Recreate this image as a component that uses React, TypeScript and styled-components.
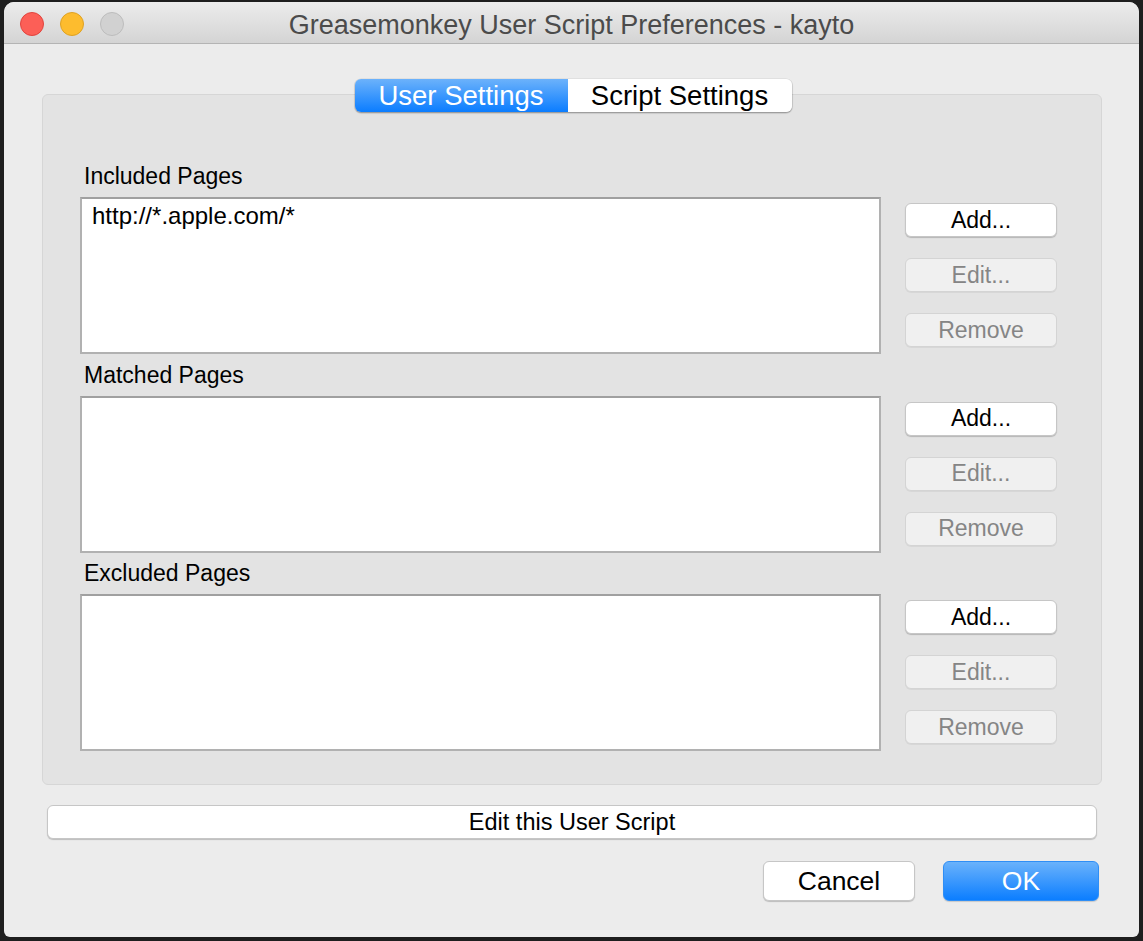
import React from "react";
import styled, { createGlobalStyle, css } from "styled-components";

const Global = createGlobalStyle`
  html, body { margin: 0; padding: 0; background: #1e1e1e; }
  body { font-family: "Liberation Sans", Arial, sans-serif; }
  * { box-sizing: border-box; }
`;

const Stage = styled.div`
  width: 1143px;
  height: 941px;
  padding: 2px 4px 4px 4px;
  background: #1e1e1e;
`;

const Window = styled.div`
  width: 1135px;
  height: 935px;
  background: #ececec;
  border-radius: 10px 10px 6px 6px;
  overflow: hidden;
  display: flex;
  flex-direction: column;
`;

const TitleBar = styled.div`
  height: 41px;
  flex: none;
  display: flex;
  align-items: center;
  position: relative;
  background: linear-gradient(#ececec, #d4d4d4);
  border-bottom: 1px solid #b4b4b4;
  box-sizing: content-box;
`;

const Lights = styled.div`
  display: flex;
  gap: 16px;
  padding-left: 16px;
  position: absolute;
  left: 0;
  top: 10px;
`;

const Light = styled.span<{ $c: string; $b: string }>`
  width: 24px;
  height: 24px;
  border-radius: 50%;
  background: ${(p) => p.$c};
  border: 1px solid ${(p) => p.$b};
`;

const Title = styled.div`
  flex: 1;
  text-align: center;
  font-size: 27px;
  color: #4b4b4b;
  padding-top: 5px;
`;

const Body = styled.div`
  flex: 1;
  display: flex;
  flex-direction: column;
  padding: 35px 37px 0 38px;
`;

const TabRow = styled.div`
  display: flex;
  justify-content: center;
  margin-bottom: -18px;
  position: relative;
  z-index: 1;
  padding-left: 2px;
`;

const Segmented = styled.div`
  display: flex;
  height: 33px;
  border-radius: 6px;
  box-shadow: 0 0.5px 0 1px rgba(0, 0, 0, 0.08), 0 1px 1.5px rgba(0, 0, 0, 0.3);
  overflow: hidden;
`;

const Tab = styled.div<{ $active?: boolean }>`
  display: flex;
  align-items: center;
  justify-content: center;
  font-size: 27.5px;
  line-height: 1;
  ${(p) =>
    p.$active
      ? css`
          width: 213px;
          color: #fff;
          background: linear-gradient(#6cb2fb, #0b7dff);
        `
      : css`
          width: 224px;
          color: #000;
          background: #fff;
        `}
`;

const GroupBox = styled.div`
  height: 691px;
  background: #e3e3e3;
  border: 1px solid #d6d6d6;
  border-radius: 6px;
  padding: 69px 44px 0 37px;
  display: flex;
  flex-direction: column;
  gap: 8.5px;
`;

const Section = styled.div`
  display: flex;
  flex-direction: column;
  gap: 9px;
`;

const Label = styled.div`
  height: 24px;
  line-height: 24px;
  font-size: 23px;
  color: #000;
  padding-left: 4px;
`;

const Row = styled.div`
  display: flex;
  gap: 24px;
`;

const ListBox = styled.div`
  width: 801px;
  height: 157px;
  background: #fff;
  border: 2px solid #b1b1b1;
  border-top-color: #a0a0a0;
  padding: 4px 10px;
  font-size: 24px;
  line-height: 26px;
  color: #000;
`;

const Buttons = styled.div`
  display: flex;
  flex-direction: column;
  gap: 21px;
  padding-top: 6px;
`;

const PushButton = styled.div<{ $disabled?: boolean }>`
  width: 152px;
  height: 34px;
  border-radius: 6px;
  display: flex;
  align-items: center;
  justify-content: center;
  font-size: 23px;
  ${(p) =>
    p.$disabled
      ? css`
          background: #f0f0f0;
          color: #858585;
          border: 1px solid #d4d4d4;
          box-shadow: 0 1px 0 rgba(0, 0, 0, 0.05);
        `
      : css`
          background: #fff;
          color: #000;
          border: 1px solid #c6c6c6;
          box-shadow: 0 1px 1px rgba(0, 0, 0, 0.2);
        `}
`;

const WideButton = styled.div`
  margin: 20px 5px 0 5px;
  height: 34px;
  border-radius: 6px;
  background: #fff;
  border: 1px solid #c6c6c6;
  box-shadow: 0 1px 1px rgba(0, 0, 0, 0.2);
  display: flex;
  align-items: center;
  justify-content: center;
  font-size: 23.5px;
  color: #000;
`;

const Footer = styled.div`
  display: flex;
  justify-content: flex-end;
  gap: 28px;
  margin-top: 22px;
  padding-right: 3px;
`;

const DialogButton = styled.div<{ $primary?: boolean }>`
  height: 40px;
  border-radius: 6px;
  display: flex;
  align-items: center;
  justify-content: center;
  font-size: 26.5px;
  ${(p) =>
    p.$primary
      ? css`
          width: 156px;
          color: #fff;
          background: linear-gradient(#6ab2fb, #0c7eff);
          border: 1px solid #2f8ef5;
          box-shadow: 0 1px 1px rgba(0, 0, 0, 0.15);
        `
      : css`
          width: 152px;
          color: #000;
          background: #fff;
          border: 1px solid #c6c6c6;
          box-shadow: 0 1px 1px rgba(0, 0, 0, 0.2);
        `}
`;

const sections = [
  { label: "Included Pages", items: ["http://*.apple.com/*"] },
  { label: "Matched Pages", items: [] as string[] },
  { label: "Excluded Pages", items: [] as string[] },
];

export default function App() {
  return (
    <Stage>
      <Global />
      <Window>
        <TitleBar>
          <Lights>
            <Light $c="#fc5f57" $b="#e0443e" />
            <Light $c="#fdbc2e" $b="#dea123" />
            <Light $c="#d1d1d1" $b="#bcbcbc" />
          </Lights>
          <Title>Greasemonkey User Script Preferences - kayto</Title>
        </TitleBar>
        <Body>
          <TabRow>
            <Segmented>
              <Tab $active>User Settings</Tab>
              <Tab>Script Settings</Tab>
            </Segmented>
          </TabRow>
          <GroupBox>
            {sections.map((s) => (
              <Section key={s.label}>
                <Label>{s.label}</Label>
                <Row>
                  <ListBox>
                    {s.items.map((i) => (
                      <div key={i}>{i}</div>
                    ))}
                  </ListBox>
                  <Buttons>
                    <PushButton>Add...</PushButton>
                    <PushButton $disabled>Edit...</PushButton>
                    <PushButton $disabled>Remove</PushButton>
                  </Buttons>
                </Row>
              </Section>
            ))}
          </GroupBox>
          <WideButton>Edit this User Script</WideButton>
          <Footer>
            <DialogButton>Cancel</DialogButton>
            <DialogButton $primary>OK</DialogButton>
          </Footer>
        </Body>
      </Window>
    </Stage>
  );
}
